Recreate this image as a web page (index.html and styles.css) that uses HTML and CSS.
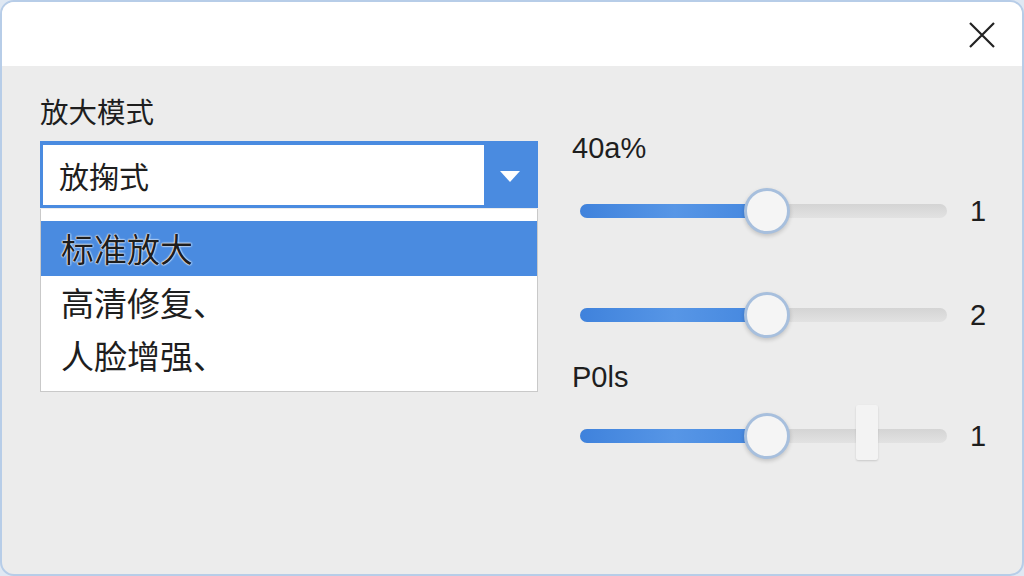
FILE: index.html
```html
<!DOCTYPE html>
<html lang="zh">
<head>
<meta charset="utf-8">
<title>放大模式</title>
<link rel="stylesheet" href="styles.css">
</head>
<body>
<div class="window">
  <div class="titlebar">
    <button class="close" aria-label="关闭">
      <svg width="28" height="28" viewBox="0 0 28 28"><path d="M2 2 L26 26 M26 2 L2 26" stroke="#222" stroke-width="2.2" fill="none"/></svg>
    </button>
  </div>
  <div class="content">
    <div class="left">
      <div class="label-cn">放大模式</div>
      <div class="select">
        <div class="field">放掬式</div>
        <div class="arrow"><span class="tri"></span></div>
      </div>
      <ul class="list">
        <li class="item selected">标准放大</li>
        <li class="item">高清修复、</li>
        <li class="item">人脸增强、</li>
      </ul>
    </div>
    <div class="right">
      <div class="label-en first">40a%</div>
      <div class="slider-row">
        <div class="track"><div class="fill"></div><div class="thumb"></div></div>
        <span class="value">1</span>
      </div>
      <div class="slider-row second">
        <div class="track"><div class="fill"></div><div class="thumb"></div></div>
        <span class="value">2</span>
      </div>
      <div class="label-en third">P0ls</div>
      <div class="slider-row last">
        <div class="track"><div class="fill"></div><div class="thumb"></div><div class="rect-thumb"></div></div>
        <span class="value">1</span>
      </div>
    </div>
  </div>
</div>
</body>
</html>
```
FILE: styles.css
```css
* { box-sizing: border-box; }
html, body { margin: 0; padding: 0; }
body {
  width: 1024px;
  height: 576px;
  background: #dfe8f3;
  font-family: "Liberation Sans", "Noto Sans CJK SC", sans-serif;
  color: #1e1e1e;
  overflow: hidden;
}
.window {
  width: 1024px;
  height: 576px;
  border: 2px solid #b7cde8;
  border-radius: 14px;
  overflow: hidden;
  background: #ececec;
  display: flex;
  flex-direction: column;
}
.titlebar {
  height: 64px;
  background: #ffffff;
  display: flex;
  align-items: center;
  justify-content: flex-end;
  padding-right: 26px;
  flex: none;
}
.close {
  border: 0;
  background: transparent;
  padding: 0;
  width: 28px;
  height: 28px;
  display: block;
  margin-top: 2px;
}
.close svg { display: block; }
.content {
  flex: 1;
  display: flex;
  padding-left: 38px;
}
.left {
  width: 498px;
  padding-top: 27px;
}
.label-cn {
  font-family: "Noto Sans CJK SC", sans-serif;
  font-size: 28.5px;
  line-height: 36px;
  margin-bottom: 12px;
}
.select {
  height: 67px;
  background: #4a8be0;
  padding: 4px 2px 3px 3px;
  display: flex;
}
.field {
  flex: 1;
  background: #ffffff;
  font-family: "Noto Sans CJK SC", sans-serif;
  font-size: 30px;
  line-height: 60px;
  padding-left: 16px;
}
.arrow {
  width: 52px;
  display: flex;
  align-items: center;
  justify-content: center;
}
.tri {
  width: 0;
  height: 0;
  border-left: 10px solid transparent;
  border-right: 10px solid transparent;
  border-top: 11px solid #ffffff;
  margin-top: 2px;
}
.list {
  list-style: none;
  margin: 1px 0 0 0;
  padding: 12px 0 8px 0;
  background: #ffffff;
  border: 1px solid #c9c9c9;
  border-top: 0;
  height: 183px;
}
.item {
  font-family: "Noto Sans CJK SC", sans-serif;
  font-size: 33px;
  height: 53px;
  line-height: 53px;
  padding-left: 20px;
}
.item.selected {
  background: #4a8be0;
  height: 55px;
  line-height: 55px;
  text-shadow: 0 0 2px #ffffff, 0 0 2px #ffffff, 0 0 1px #ffffff;
}
.right {
  margin-left: 34px;
  width: 430px;
  padding-top: 65px;
}
.label-en {
  font-size: 29px;
  line-height: 34px;
}
.slider-row {
  display: flex;
  align-items: center;
  height: 46px;
  padding-left: 8px;
}
.slider-row { margin-top: 23px; }
.slider-row.second { margin-top: 58px; }
.label-en.third { margin-top: 22px; }
.slider-row.last { margin-top: 19px; }
.track {
  position: relative;
  width: 367px;
  height: 14px;
  border-radius: 7px;
  background: linear-gradient(#d4d4d4, #e2e2e2);
}
.fill {
  width: 190px;
  height: 14px;
  border-radius: 7px 0 0 7px;
  background: linear-gradient(90deg, #3f82dc, #5796e6 50%, #4285de);
}
.thumb {
  position: absolute;
  left: 164px;
  top: -16px;
  width: 46px;
  height: 46px;
  border-radius: 50%;
  background: #f5f5f5;
  border: 3px solid #a7bfdd;
  box-shadow: 0 2px 4px rgba(0,0,0,0.18);
}
.rect-thumb {
  position: absolute;
  left: 276px;
  top: -24px;
  width: 22px;
  height: 55px;
  background: #f3f3f3;
  border-radius: 2px;
  box-shadow: 0 1px 2px rgba(0,0,0,0.15);
}
.value {
  margin-left: 23px;
  font-size: 29px;
  line-height: 34px;
}
```
